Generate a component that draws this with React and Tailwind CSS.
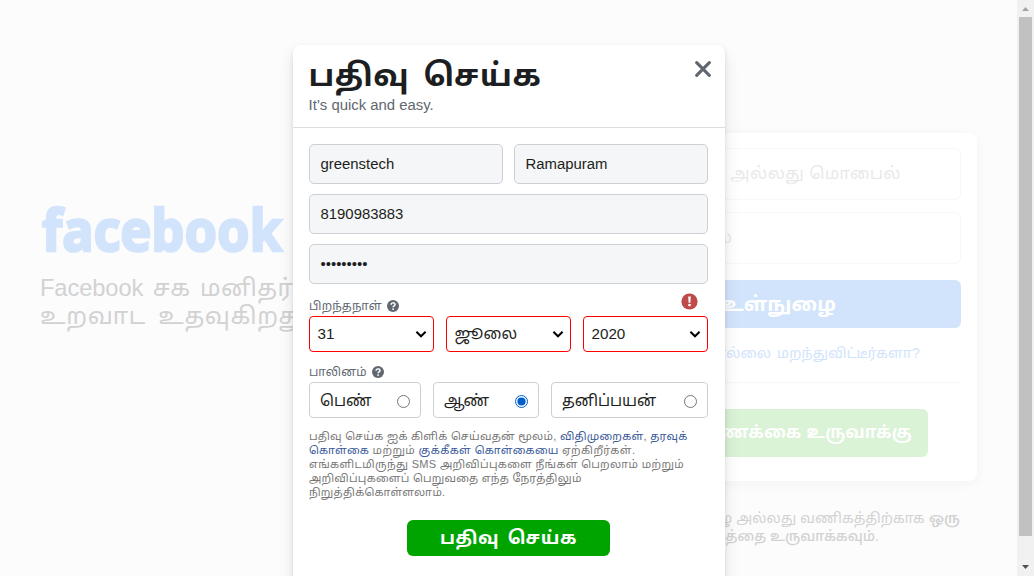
import React from "react";

const tamil = "font-['Liberation_Sans','Noto_Sans_Tamil','Noto_Sans',sans-serif]";

function Field({ children, className = "" }) {
  return (
    <div className={`flex h-10 items-center rounded-[5px] border border-[#ccd0d5] bg-[#f5f6f7] px-[10.5px] text-[14.9px] text-[#1c1e21] ${className}`}>
      {children}
    </div>
  );
}

function Help() {
  return (
    <svg className="h-3 w-3 shrink-0" viewBox="0 0 12 12">
      <circle cx="6" cy="6" r="6" fill="#606770" />
      <path d="M4.1 4.7C4.1 2.3 8 2.3 8 4.5C8 5.8 6.1 5.8 6.1 7.2" fill="none" stroke="#fff" strokeWidth="1.5" />
      <circle cx="6.1" cy="9.1" r="0.95" fill="#fff" />
    </svg>
  );
}

function Select({ children, className = "text-[15.2px]" }) {
  return (
    <div className={`flex h-9 w-[125px] items-center justify-between whitespace-nowrap rounded-[4px] border border-[#ff0000] pl-[7.5px] pr-[6px] text-[#1c1e21] ${className}`}>
      <span className="leading-5">{children}</span>
      <svg className="h-3 w-3 shrink-0" viewBox="0 0 12 12">
        <path d="M1.4 3.8L6 8.3L10.6 3.8" fill="none" stroke="#000" strokeWidth="2" />
      </svg>
    </div>
  );
}

function Radio({ label, checked, className }) {
  return (
    <div className={`flex h-9 items-center justify-between whitespace-nowrap rounded-[4px] border border-[#ccd0d5] pl-[10px] pr-[10px] text-[#1c1e21] ${className}`}>
      <span className="pt-[2px]">{label}</span>
      <svg className="mt-[2px] h-[13px] w-[13px] shrink-0" viewBox="0 0 13 13">
        <circle cx="6.5" cy="6.5" r="6" fill="#fff" stroke={checked ? "#005fcc" : "#767676"} />
        {checked && <circle cx="6.5" cy="6.5" r="4.1" fill="#005fcc" />}
      </svg>
    </div>
  );
}

function LoginPage() {
  return (
    <div className="flex h-full w-[1017px] justify-between whitespace-nowrap pl-10 pr-10">
      <div className="w-[300px] pt-[200px]">
        <svg className="block h-[60px] w-[250px] overflow-visible" viewBox="0 0 250 60">
          <text x="2" y="51" textLength="240" lengthAdjust="spacingAndGlyphs" fill="#d2e4fc" stroke="#d2e4fc" strokeWidth="2.6" fontFamily="Noto Sans, sans-serif" fontWeight="700" fontSize="57.5">facebook</text>
        </svg>
        <div className="pt-[14px] text-[24px] leading-7 text-[#d2d2d3]">
          <div className="tracking-[0.4px] [word-spacing:2.5px]"><span className="text-[23.7px] tracking-[-0.1px]">Facebook</span> சக மனிதர்களுடன்</div>
          <div className="tracking-[0.6px] [word-spacing:5px]">உறவாட உதவுகிறது</div>
        </div>
      </div>
      <div className="w-[396px] pt-[133px]">
        <div className="flex h-[348px] flex-col items-center rounded-lg bg-white px-4 pt-[15px] shadow-[0_2px_14px_rgba(0,0,0,0.04)]">
          <div className="flex h-[52px] w-full items-center justify-end rounded-md border border-[#f8f8f9] pr-[59px] text-[17px] tracking-[0.4px] text-[#e9e9eb]">மின்னஞ்சல் அல்லது மொபைல்</div>
          <div className="mt-3 flex h-[52px] w-full items-center rounded-md border border-[#f8f8f9] text-[17px] text-[#e9e9eb]">
            <span className="w-[134px] text-right">கடவுச்சொல்</span>
          </div>
          <div className="mt-4 flex h-12 w-full items-center justify-center rounded-md bg-[#d2e4fc] text-[20px] font-bold text-white">உள்நுழை</div>
          <div className="mt-4 flex h-[18px] w-full items-center justify-end pr-[41px] text-[14px] tracking-[0.15px] text-[#d2e4fc] [word-spacing:2px]">கடவுச்சொல்லை மறந்துவிட்டீர்களா?</div>
          <div className="mt-5 h-px w-full bg-[#f6f7f8]" />
          <div className="mt-[26px] flex h-12 w-[298px] items-center justify-end rounded-md bg-[#daf2d6] pr-[16px] text-[17px] font-bold tracking-[0.2px] text-white">புதிய கணக்கை உருவாக்கு</div>
        </div>
        <div className="flex flex-col items-end pt-[28px] text-[14px] leading-[18px] text-[#d2d2d3]">
          <div className="pr-[17px] tracking-[0.15px]">பிரபலம், குழு அல்லது வணிகத்திற்காக <span className="font-semibold">ஒரு</span></div>
          <div className="pr-[98px] font-medium">பக்கத்தை உருவாக்கவும்.</div>
        </div>
      </div>
    </div>
  );
}

function SignupDialog() {
  return (
    <div className="absolute left-[293px] top-[45px] h-[560px] w-[432px] rounded-lg bg-white shadow-[0_2px_4px_rgba(0,0,0,0.1),0_8px_16px_rgba(0,0,0,0.1)]">
      <div className="flex h-[83px] justify-between border-b border-[#dadde1] pl-[15.5px] pr-[14px]">
        <div className="whitespace-nowrap">
          <div className="h-[50px] text-[31px] font-bold leading-[61px] tracking-[0.6px] text-[#1c1e21] [word-spacing:5px]">பதிவு செய்க</div>
          <div className="text-[14.9px] leading-5 text-[#606770]">It’s quick and easy.</div>
        </div>
        <svg className="mt-4 h-4 w-4" viewBox="0 0 16 16">
          <path d="M1.7 1.7L14.3 14.3M14.3 1.7L1.7 14.3" stroke="#606770" strokeWidth="3.1" strokeLinecap="round" />
        </svg>
      </div>
      <div className="flex flex-col px-4 pt-4">
        <div className="flex gap-[11px]">
          <Field className="w-[194px]">greenstech</Field>
          <Field className="w-[194px]">Ramapuram</Field>
        </div>
        <Field className="mt-[10px] w-[399px]">8190983883</Field>
        <Field className="mt-[10px] w-[399px]">•••••••••</Field>
        <div className="flex h-8 w-[399px] items-start justify-between pr-[10px]">
          <div className="flex items-center gap-[5px] pt-[12px] text-[12px] leading-5 tracking-[0.15px] text-[#606770]">
            <span>பிறந்தநாள்</span><Help />
          </div>
          <svg className="mt-[9px] h-[17px] w-[17px]" viewBox="0 0 17 17">
            <circle cx="8.5" cy="8.5" r="8.1" fill="#be4b49" />
            <path d="M7.2 3.4H9.8L9.4 9.7H7.6Z" fill="#fff" />
            <rect x="7.3" y="10.9" width="2.4" height="2.3" fill="#fff" />
          </svg>
        </div>
        <div className="flex gap-3">
          <Select>31</Select><Select className="text-[15.5px]">ஜூலை</Select><Select>2020</Select>
        </div>
        <div className="flex h-[30px] items-center gap-[5px] pt-[10px] text-[12px] leading-5 tracking-[0.15px] text-[#606770]">
          <span>பாலினம்</span><Help />
        </div>
        <div className="flex gap-3 text-[15.5px]">
          <Radio label="பெண்" className="w-[112px]" />
          <Radio label="ஆண்" checked className="w-[106px]" />
          <Radio label="தனிப்பயன்" className="w-[157px]" />
        </div>
        <div className="mt-[11px] whitespace-nowrap text-[11px] leading-[14px] tracking-[0.28px] text-[#777777]">
          <div>பதிவு செய்க ஐக் கிளிக் செய்வதன் மூலம், <span className="text-[#385898]">விதிமுறைகள்</span>, <span className="text-[#385898]">தரவுக்</span></div>
          <div className="tracking-[0.4px]"><span className="text-[#385898]">கொள்கை</span> மற்றும் <span className="text-[#385898]">குக்கீகள் கொள்கையை</span> ஏற்கிறீர்கள்.</div>
          <div className="tracking-[0.34px]">எங்களிடமிருந்து SMS அறிவிப்புகளை நீங்கள் பெறலாம் மற்றும்</div>
          <div>அறிவிப்புகளைப் பெறுவதை எந்த நேரத்திலும்</div>
          <div>நிறுத்திக்கொள்ளலாம்.</div>
        </div>
        <div className="ml-[98px] mt-[21px] flex h-9 w-[203px] items-center justify-center whitespace-nowrap rounded-md bg-[#00a400] pt-px text-[18px] font-bold tracking-[0.6px] text-white [word-spacing:3px]">பதிவு செய்க</div>
      </div>
    </div>
  );
}

function ScrollBar() {
  return (
    <div className="flex h-full w-[17px] flex-col items-center bg-[#f1f1f1]">
      <svg className="h-[17px] w-[17px] shrink-0" viewBox="0 0 17 17"><path d="M5 11L8.5 7L12 11Z" fill="#a3a3a3" /></svg>
      <div className="h-[519px] w-[13px] bg-[#c1c1c1]" />
      <div className="grow" />
      <svg className="h-[17px] w-[17px] shrink-0" viewBox="0 0 17 17"><path d="M5 6L8.5 10L12 6Z" fill="#505050" /></svg>
    </div>
  );
}

export default function App() {
  return (
    <div className={`relative flex h-[576px] w-[1034px] overflow-hidden bg-[#fcfcfc] ${tamil}`}>
      <LoginPage />
      <SignupDialog />
      <ScrollBar />
    </div>
  );
}
